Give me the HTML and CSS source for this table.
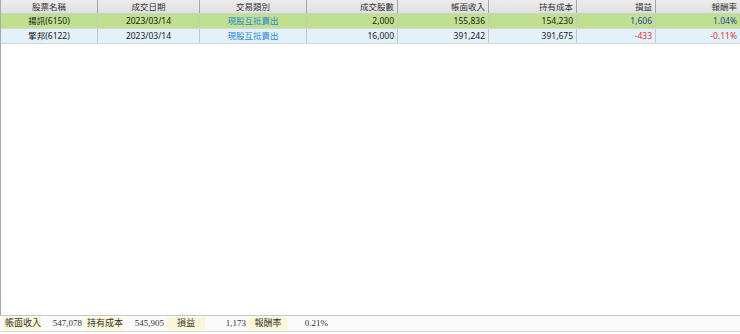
FILE: index.html
```html
<!DOCTYPE html>
<html lang="zh-Hant">
<head>
<meta charset="utf-8">
<title>交易明細</title>
<link rel="stylesheet" href="styles.css">
</head>
<body>
<div class="page">
  <div class="grid-area">
    <div class="row head">
      <div class="c center">股票名稱</div>
      <div class="c center">成交日期</div>
      <div class="c center">交易類別</div>
      <div class="c right">成交股數</div>
      <div class="c right">帳面收入</div>
      <div class="c right">持有成本</div>
      <div class="c right">損益</div>
      <div class="c right">報酬率</div>
    </div>
    <div class="row data green">
      <div class="c center">揚訊(6150)</div>
      <div class="c center">2023/03/14</div>
      <div class="c center link">現股互抵賣出</div>
      <div class="c right">2,000</div>
      <div class="c right">155,836</div>
      <div class="c right">154,230</div>
      <div class="c right pos">1,606</div>
      <div class="c right pos">1.04%</div>
    </div>
    <div class="row data blue">
      <div class="c center">擎邦(6122)</div>
      <div class="c center">2023/03/14</div>
      <div class="c center link">現股互抵賣出</div>
      <div class="c right">16,000</div>
      <div class="c right">391,242</div>
      <div class="c right">391,675</div>
      <div class="c right neg">-433</div>
      <div class="c right neg">-0.11%</div>
    </div>
    <div class="empty"></div>
  </div>
  <div class="footer">
    <div class="lbl">帳面收入</div>
    <div class="val">547,078</div>
    <div class="lbl">持有成本</div>
    <div class="val">545,905</div>
    <div class="lbl mid">損益</div>
    <div class="val">1,173</div>
    <div class="lbl mid">報酬率</div>
    <div class="val">0.21%</div>
  </div>
</div>
</body>
</html>
```
FILE: styles.css
```css
html, body {
  margin: 0;
  padding: 0;
  background: #ffffff;
}
body {
  font-family: "Noto Sans", "Noto Sans CJK TC", sans-serif;
  font-size: 8.5px;
  color: #1a1a1a;
}
.page {
  width: 740px;
  height: 334px;
  display: flex;
  flex-direction: column;
}
.grid-area {
  height: 315px;
  display: flex;
  flex-direction: column;
  border-left: 1px solid #a9a9a9;
  box-sizing: border-box;
}
.row {
  display: grid;
  grid-template-columns: 97px 102px 107px 91px 91px 88px 79px 84px;
}
.c {
  overflow: hidden;
  white-space: nowrap;
  padding: 0 3px;
  box-sizing: border-box;
}
.center { text-align: center; }
.right { text-align: right; }
.head {
  height: 14px;
  background: linear-gradient(#ececec, #e1e1e1);
  border-bottom: 1px solid #cfcfcf;
  box-sizing: border-box;
  color: #333333;
}
.head .c {
  line-height: 13px;
  border-right: 1px solid #a6a6a6;
}
.head .c:last-child { border-right: none; }
.data {
  height: 15px;
  border-bottom: 1px solid #d6d6d6;
  box-sizing: border-box;
}
.data .c {
  line-height: 14px;
  border-right: 1px solid #c8c8c8;
}
.data .c:last-child { border-right: none; }
.green { background: #bee08f; }
.blue { background: #e3f1fb; }
.link { color: #2a88d6; }
.pos { color: #2c44a8; }
.neg { color: #e2363b; }
.empty { flex: 1; }
.footer {
  height: 17px;
  border-top: 1px solid #c6c6c6;
  border-bottom: 1px solid #d4d4d4;
  background: #fbfbfb;
  box-sizing: border-box;
  display: flex;
  align-items: center;
  padding-left: 3px;
  font-family: "Liberation Serif", "Noto Sans CJK TC", serif;
  font-size: 9px;
  color: #333333;
}
.lbl {
  width: 38px;
  height: 13px;
  line-height: 13px;
  background: #fbf7d6;
  padding-left: 2px;
  box-sizing: border-box;
  white-space: nowrap;
}
.lbl.mid {
  text-align: center;
  padding-left: 0;
}
.val {
  width: 44px;
  text-align: right;
  padding-right: 3px;
  box-sizing: border-box;
  line-height: 13px;
}
```
